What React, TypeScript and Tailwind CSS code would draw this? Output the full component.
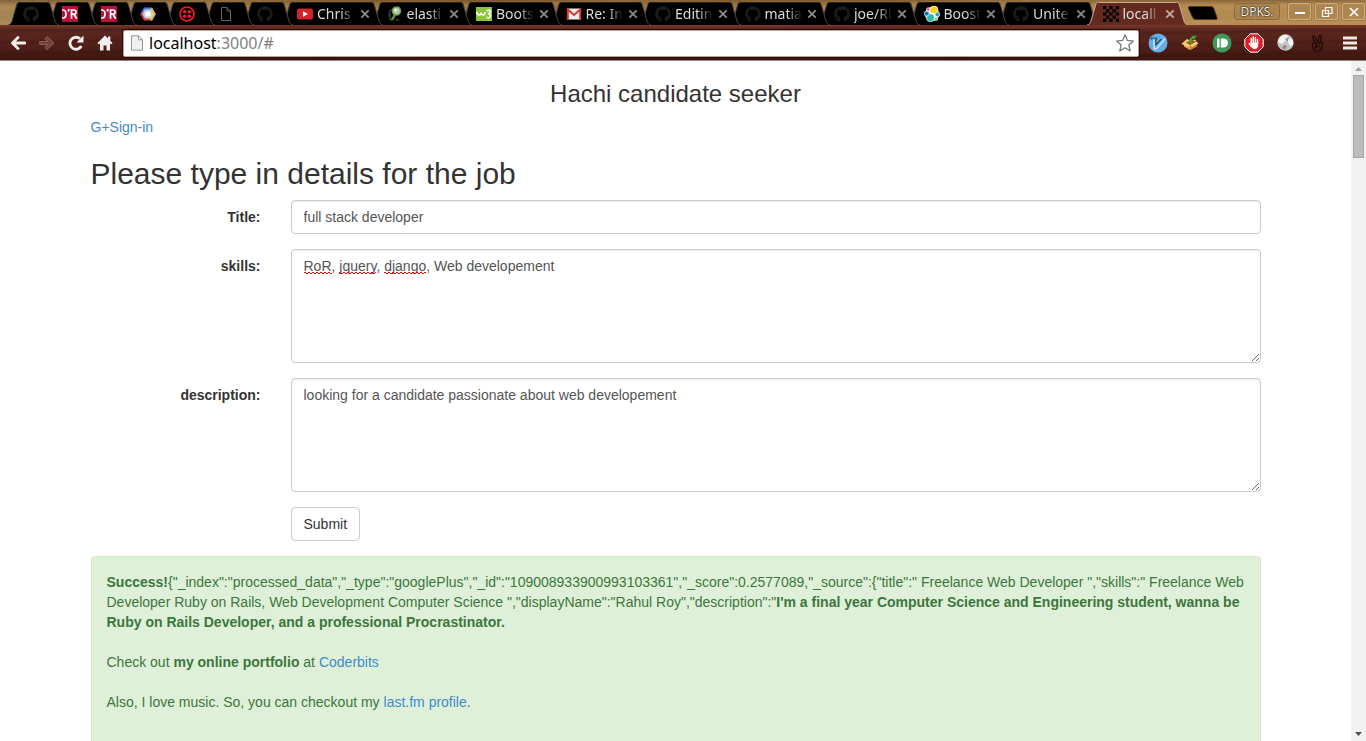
import React from "react";
import { FaGithub } from "react-icons/fa";

const TabCap = ({ right = false, active = false }: { right?: boolean; active?: boolean }) => (
  <svg
    viewBox="0 0 12 25"
    className={right ? "h-[25px] w-3 shrink-0 -scale-x-100" : "h-[25px] w-3 shrink-0"}
    aria-hidden="true"
  >
    <path d="M0 25C2.500 24.500 3.300 23 4 21L8.600 5C9.200 3 10 2 12 2V25Z" fill={active ? "#642a20" : "#000"} />
    <path
      d="M0 25C2.500 24.500 3.300 23 4 21L8.600 5C9.200 3 10 2 12 2"
      fill="none"
      stroke={active ? "#c9aaa0" : "#4a4440"}
      strokeWidth="1"
    />
  </svg>
);

const RedDR = () => (
  <svg viewBox="0 0 16 16" className="size-4">
    <rect width="16" height="16" fill="#b5123b" />
    <path
      d="M0 4H1C5 4 5 12 1 12H0M7 3L6.300 5.500M9.500 12.800V4H12C14.800 4 14.800 8.200 12 8.200H9.500M12 8.200L14.700 12.800"
      fill="none"
      stroke="#fff"
      strokeWidth="1.700"
    />
  </svg>
);

const CloudHex = () => (
  <svg viewBox="0 0 16 16" className="size-4">
    <path d="M4 1.500H12L14 5.500H5L2.500 10L.3 8Z" fill="#4a7fe8" />
    <path d="M12 1.500L15.800 8L12 14.500L8 12L12.500 8L10 3.500Z" fill="#e9bd2d" />
    <path d="M.3 8L4 14.500H12L13.500 11H7L3.500 6Z" fill="#d9483b" />
    <path d="M11 14.500H12L15.800 8L13 8L9.500 12Z" fill="#e9bd2d" />
    <path d="M5 3.500H11L13.500 8L11 12.500H5L2.500 8Z" fill="#c9d2e2" />
    <circle cx="8" cy="8" r="2.600" fill="#fff" />
  </svg>
);

const RedDots = () => (
  <svg viewBox="0 0 16 16" className="size-4">
    <circle cx="8" cy="8" r="7" fill="none" stroke="#ee1c25" strokeWidth="1.700" />
    <g fill="#ee1c25">
      <circle cx="5.700" cy="5.700" r="1.800" />
      <circle cx="10.300" cy="5.700" r="1.800" />
      <circle cx="5.700" cy="10.300" r="1.800" />
      <circle cx="10.300" cy="10.300" r="1.800" />
    </g>
  </svg>
);

const DarkPage = () => (
  <svg viewBox="0 0 16 16" className="size-4">
    <path d="M3.500 1.500H9L12.500 5V14.500H3.500ZM9 1.500V5H12.500" fill="none" stroke="#666" />
  </svg>
);

const Cat = () => <FaGithub className="size-4 text-[#1b1b1b]" />;

const Play = () => (
  <svg viewBox="0 0 16 16" className="size-4">
    <rect y="2.500" width="16" height="11" rx="2.500" fill="#d3222a" />
    <path d="M6 5.300L11 8L6 10.700Z" fill="#fff" />
  </svg>
);

const Magnifier = () => (
  <svg viewBox="0 0 16 16" className="size-4">
    <path d="M5 4Q1.500 4 3 8Q1 9 3 10Q2 14 5 14M9 14H12" fill="none" stroke="#303030" strokeWidth="2" />
    <path d="M8 8.500L5 14" stroke="#5d8c35" strokeWidth="2.600" />
    <circle cx="9.500" cy="5" r="4" fill="#b5c9b0" stroke="#6d9f46" strokeWidth="1.600" />
    <circle cx="8.500" cy="4" r="1.500" fill="#e9f1e7" />
  </svg>
);

const GreenW3 = () => (
  <svg viewBox="0 0 16 16" className="size-4">
    <rect y="1" width="16" height="14" fill="#8bc53f" />
    <path
      d="M.8 6Q1 9 3 9Q4.800 9 4.800 6.500Q5 9 7 9Q9 9 9 6M10.500 5Q14.300 3 14.300 5.300Q14.300 7.500 12 7.500Q14.800 8 14.300 10.500Q13 13 10.500 11"
      fill="none"
      stroke="#fff"
      strokeWidth="1.600"
    />
  </svg>
);

const Mail = () => (
  <svg viewBox="0 0 16 16" className="size-4">
    <rect x="1" y="2.500" width="14" height="11" fill="#ececec" />
    <path d="M1.800 13.500V3.500L8 9L14.200 3.500V13.500" fill="none" stroke="#d8392c" strokeWidth="2" />
  </svg>
);

const Balls = () => (
  <svg viewBox="0 0 16 16" className="size-4">
    <circle cx="8" cy="8" r="7" fill="#fff" />
    <circle cx="10" cy="4" r="4" fill="#fed10a" stroke="#fff" strokeWidth=".7" />
    <circle cx="6.500" cy="11.700" r="4" fill="#24bbb1" stroke="#fff" strokeWidth=".7" />
    <circle cx="2.700" cy="7.500" r="2.500" fill="#0b78b5" stroke="#fff" strokeWidth=".7" />
    <circle cx="13.400" cy="8.500" r="2.400" fill="#26a5d8" stroke="#fff" strokeWidth=".7" />
    <circle cx="4.200" cy="3.400" r="1.700" fill="#ef5098" stroke="#fff" strokeWidth=".7" />
    <circle cx="12" cy="12.700" r="1.700" fill="#91c73e" stroke="#fff" strokeWidth=".7" />
  </svg>
);

const Checker = () => (
  <svg viewBox="0 0 16 16" className="size-4" fill="#000">
    <path d="M0 0H3.200V3.200H0ZM6.400 0H9.600V3.200H6.400ZM12.800 0H16V3.200H12.800ZM3.200 3.200H6.400V6.400H3.200ZM9.600 3.200H12.800V6.400H9.600ZM0 6.400H3.200V9.600H0ZM6.400 6.400H9.600V9.600H6.400ZM12.800 6.400H16V9.600H12.800ZM3.200 9.600H6.400V12.800H3.200ZM9.600 9.600H12.800V12.800H9.600ZM0 12.800H3.200V16H0ZM6.400 12.800H9.600V16H6.400ZM12.800 12.800H16V16H12.800Z" />
  </svg>
);

type TabData = { icon: () => React.JSX.Element; title?: string; name?: string; active?: boolean };

const tabs: TabData[] = [
  { icon: Cat, name: "GitHub" },
  { icon: RedDR, name: "Pinned page" },
  { icon: RedDR, name: "Pinned page" },
  { icon: CloudHex, name: "Cloud console" },
  { icon: RedDots, name: "Pinned page" },
  { icon: DarkPage, name: "Blank page" },
  { icon: Cat, name: "GitHub" },
  { icon: Play, title: "Chris" },
  { icon: Magnifier, title: "elasti" },
  { icon: GreenW3, title: "Boots" },
  { icon: Mail, title: "Re: In" },
  { icon: Cat, title: "Editin" },
  { icon: Cat, title: "matia" },
  { icon: Cat, title: "joe/Rl" },
  { icon: Balls, title: "Boost" },
  { icon: Cat, title: "Unite" },
  { icon: Checker, title: "locall", active: true },
];

const Tab = ({ tab, order }: { tab: TabData; order: number }) => {
  const Icon = tab.icon;
  const fill = tab.active ? "bg-[#642a20] border-[#c9aaa0]" : "bg-black border-[#2a231c]";
  return (
    <div
      className={`relative -mr-3 flex h-[25px] min-w-0 ${tab.title ? "flex-1" : "w-[51px] shrink-0"}`}
      style={{ zIndex: order }}
    >
      <TabCap active={tab.active} />
      <div className={`mt-[2px] flex min-w-0 flex-1 items-center border-t ${fill}`}>
        <button
          className={`flex min-w-0 flex-1 items-center gap-1 ${tab.title ? "pl-1" : "justify-center pr-[6px]"}`}
          aria-label={tab.name ?? tab.title}
        >
          <span className="shrink-0">
            <Icon />
          </span>
          {tab.title && (
            <span className="min-w-0 flex-1 overflow-hidden text-left text-[14px] leading-5 whitespace-nowrap text-[#dcdcdc] [mask-image:linear-gradient(to_right,#000_60%,transparent)]">
              {tab.title}
            </span>
          )}
        </button>
        {tab.title && (
          <button className="ml-1 grid h-4 w-3 shrink-0 place-items-center" aria-label={`Close ${tab.title}`}>
            <svg viewBox="0 0 10 10" className={`size-[10px] ${tab.active ? "text-[#c4aaa4]" : "text-[#8c8c8c]"}`}>
              <path d="M1.300 1.300L8.700 8.700M8.700 1.300L1.300 8.700" stroke="currentColor" strokeWidth="1.800" />
            </svg>
          </button>
        )}
      </div>
      <TabCap right active={tab.active} />
    </div>
  );
};

const winButton =
  "grid h-[17px] w-[23px] place-items-center rounded-[2px] border border-[#d2ae80] bg-[#7a542826] text-white shadow-[0_0_0_1px_#8a673c80]";

const WindowControls = () => (
  <div className="flex w-[132px] shrink-0 items-start gap-1 pt-[3px]">
    <div className="mr-1 h-[17px] w-[46px] rounded-[3px] border border-[#8a6a40] bg-[#7a542826] text-center font-['Open_Sans',sans-serif] text-[12px] leading-[15px] text-white [text-shadow:0_0_2px_#000,0_0_1px_#000]">
      DPKS.
    </div>
    <button className={winButton} aria-label="Minimize">
      <svg viewBox="0 0 12 12" className="size-3">
        <path d="M1 7H11" stroke="#fff" strokeWidth="2" />
      </svg>
    </button>
    <button className={winButton} aria-label="Restore">
      <svg viewBox="0 0 12 12" className="size-3" fill="none" stroke="#fff">
        <path d="M4.500 1.500H11V7.500H4.500ZM1.500 4.500H7.500V10.500H1.500Z" strokeWidth="1.200" />
      </svg>
    </button>
    <button className={winButton} aria-label="Close">
      <svg viewBox="0 0 12 12" className="size-3">
        <path d="M2 2L10 10M10 2L2 10" stroke="#fff" strokeWidth="1.700" />
      </svg>
    </button>
  </div>
);

const navButton = "grid h-8 w-[29px] shrink-0 place-items-center";
const extButton = "grid h-8 w-8 shrink-0 place-items-center";

const Toolbar = () => (
  <div className="flex h-9 items-center border-b border-[#8b8583] bg-[#4d1c14] bg-[repeating-linear-gradient(179deg,transparent_0_4px,#2c0c0833_6px_7px,transparent_9px_11px),linear-gradient(to_bottom,#7a382b,#5c2820_12%,#54221a_50%,#3e1610)] pt-px pl-[3px]">
    <button className={navButton} aria-label="Back">
      <svg viewBox="0 0 16 16" className="size-4">
        <path d="M15 8H3.500M8 2.500L2.500 8L8 13.500" fill="none" stroke="#f4eeee" strokeWidth="2.800" strokeLinecap="round" strokeLinejoin="round" />
      </svg>
    </button>
    <button className={navButton} aria-label="Forward">
      <svg viewBox="0 0 16 16" className="size-4">
        <path
          d="M.7 6.500H8.500L6 3.500L8 1.500L15 8L8 14.500L6 12.500L8.500 9.500H.7Z"
          fill="#71423a"
          stroke="#916861"
          strokeWidth=".9"
          strokeLinejoin="round"
        />
      </svg>
    </button>
    <button className={navButton} aria-label="Reload">
      <svg viewBox="0 0 16 16" className="size-4">
        <path d="M13.300 11A6 6 0 1 1 12 3.800" fill="none" stroke="#f4eeee" strokeWidth="2.800" />
        <path d="M15.500 .5V7.500H8.500Z" fill="#f4eeee" />
      </svg>
    </button>
    <button className={navButton} aria-label="Home">
      <svg viewBox="0 0 16 16" className="size-4">
        <path d="M8 .5L15.500 8L14.500 9.300L13 8.500V15.500H9.500V10.500H6.500V15.500H3V8.500L1.500 9.300L.5 8Z" fill="#f4eeee" />
        <path d="M11 1.500H13.300V6H11Z" fill="#f4eeee" />
      </svg>
    </button>
    <div className="mr-[3px] ml-1 flex h-[27px] min-w-0 flex-1 items-center rounded-[2px] border border-[#c0a39c] bg-white pr-[3px] pl-[5px] shadow-[0_0_0_1px_#2c0f0a]">
      <svg viewBox="0 0 16 16" className="size-4 shrink-0">
        <path d="M2.500 .8H9.500L13.500 4.800V15.200H2.500Z" fill="#f0f0f0" stroke="#969696" />
        <path d="M9.500 .8V4.800H13.500Z" fill="#fff" stroke="#969696" />
      </svg>
      <div className="ml-1 flex-1 text-[16px] leading-5 text-[#828282]">
        <span className="text-black">localhost</span>:3000/#
      </div>
      <button className="grid size-5 place-items-center" aria-label="Bookmark this page">
        <svg viewBox="0 0 18 18" className="size-[18px]">
          <path
            d="M9 .8L11.400 6.400L17.400 7L12.800 11L14.200 17L9 13.800L3.800 17L5.200 11L.6 7L6.600 6.400Z"
            fill="#fff"
            stroke="#747474"
            strokeWidth="1.200"
            strokeLinejoin="round"
          />
        </svg>
      </button>
    </div>
    <button className={extButton} aria-label="Vimium">
      <svg viewBox="0 0 20 20" className="size-5">
        <circle cx="10" cy="10" r="9.500" fill="#62aee2" />
        <path d="M3.500 4.500H8.500V6H7.800V11.500L13 6L12 4.500H17L17.500 6L9 16H6V6H3.500Z" fill="#74bceb" />
        <path d="M3.500 6.500V5H8.500V6.500L7.800 7V12L13.500 6" fill="none" stroke="#1b4a74" strokeWidth="1.200" />
        <path d="M17.500 5.500L8.500 16H6V7" fill="none" stroke="#e8f4fc" strokeWidth="1.100" />
      </svg>
    </button>
    <button className={extButton} aria-label="Package">
      <svg viewBox="0 0 20 20" className="size-5">
        <path d="M4 9L10 12L16.500 9V13.500L10 17L4 13.500Z" fill="#e6a94a" />
        <path d="M10 12L16.500 9V13.500L10 17Z" fill="#c98726" />
        <path d="M4 9L10 6.500L16.500 9L10 12Z" fill="#8a5a1a" />
        <path d="M4 8.500L1.500 11L8 14L10 12ZM16.500 8.500L18.500 10.500L12 14L10 12ZM4 8.500L7 6L10 7.500L6 9.500ZM16.500 8.500L15 6.500L12 8Z" fill="#f5cb77" />
        <path d="M9.500 10C8.500 6 10 4.500 12 4.300L11.500 3L17 2.500L14 6.500L13 5.700C11.500 6.500 11.500 8 12 10Z" fill="#44a52c" />
      </svg>
    </button>
    <button className={extButton} aria-label="Pushbullet">
      <svg viewBox="0 0 20 20" className="size-5">
        <circle cx="10" cy="10" r="9.500" fill="#3f9a58" />
        <path d="M5 5.500H7.500V14.500H5ZM8.800 5.500H11.500A4.500 4.500 0 0 1 11.500 14.500H8.800Z" fill="#fff" />
      </svg>
    </button>
    <button className={extButton} aria-label="Ad blocker">
      <svg viewBox="0 0 20 20" className="size-5">
        <path d="M6.200 .8H13.800L19.200 6.200V13.800L13.800 19.200H6.200L.8 13.800V6.200Z" fill="#d8202a" stroke="#fff" />
        <path
          d="M7.300 10V5.500M9.300 9V4M11.400 9V4.500M13.500 10.500V6.500M5.200 10.500L7.500 13.500"
          stroke="#fff"
          strokeWidth="1.500"
          strokeLinecap="round"
        />
        <path d="M6.600 9.500H14.200V12C14.200 17 8.500 17.500 7 13Z" fill="#fff" />
      </svg>
    </button>
    <button className={extButton} aria-label="Globe">
      <svg viewBox="0 0 20 20" className="size-5">
        <circle cx="9.500" cy="9.500" r="8.200" fill="#c4c4c4" />
        <path d="M2.500 6Q6 .8 11 1.800L12 4L9 5.500L9.500 8L6 11L2 9ZM13 5L17 7V12L14 13L11.500 9Z" fill="#f2f2f2" />
        <path d="M8 12L11 13L9 16.500L6 15ZM10 6L12.500 5L11.500 9Z" fill="#8c8c8c" />
      </svg>
    </button>
    <button className={extButton} aria-label="Peace">
      <svg viewBox="0 0 20 20" className="size-5" fill="none" stroke="#1d0a06" strokeWidth="1.200" strokeLinejoin="round">
        <path d="M7 10L4.500 4Q5.300 2 6.800 3.200L9.300 9L11.500 2.500Q13 1.500 13.500 3L12 9.500Q14.800 9 14.800 11.500L13.500 15.500L11 18H7L5 15L4.300 11.500Q5 9.500 7 10L9 12L6.500 13.500M9.300 9.800Q11.500 9 12 12M7 15L10 13.500L12 13.500" />
      </svg>
    </button>
    <button className={extButton} aria-label="Menu">
      <svg viewBox="0 0 14 14" className="size-[14px]">
        <path d="M1 2H13M1 7H13M1 12H13" stroke="#eee8e6" strokeWidth="3.200" strokeLinecap="square" />
      </svg>
    </button>
  </div>
);

const field =
  "block w-full min-w-0 flex-1 rounded-[4px] border border-[#ccc] bg-white px-3 py-[6px] text-[14px] leading-5 text-[#555] shadow-[inset_0_1px_1px_rgba(0,0,0,0.075)] outline-none";
const labelClass = "w-[170px] shrink-0 pt-[7px] text-right font-bold";
const typo =
  "bg-[linear-gradient(45deg,transparent_38%,#f00_38%_62%,transparent_62%),linear-gradient(135deg,transparent_38%,#f00_38%_62%,transparent_62%)] bg-[length:4px_2px] bg-[position:0_100%,2px_100%] bg-repeat-x";

const JobForm = () => (
  <form onSubmit={(e) => e.preventDefault()} className="mb-[15px] flex flex-col gap-[15px]">
    <div className="flex gap-[30px]">
      <label htmlFor="title" className={labelClass}>
        Title:
      </label>
      <input id="title" type="text" defaultValue="full stack developer" className={field} />
    </div>
    <div className="flex gap-[30px]">
      <label htmlFor="skills" className={labelClass}>
        skills:
      </label>
      <div className="relative flex min-w-0 flex-1">
        <textarea
          id="skills"
          rows={5}
          spellCheck={false}
          defaultValue="RoR, jquery, django, Web developement"
          className={field}
        />
        <div
          aria-hidden="true"
          className="pointer-events-none absolute inset-x-0 top-0 border border-transparent px-3 py-[6px] text-transparent"
        >
          <span className={typo}>RoR</span>, <span className={typo}>jquery</span>, <span className={typo}>django</span>
        </div>
      </div>
    </div>
    <div className="flex gap-[30px]">
      <label htmlFor="description" className={labelClass}>
        description:
      </label>
      <textarea
        id="description"
        rows={5}
        spellCheck={false}
        defaultValue="looking for a candidate passionate about web developement"
        className={field}
      />
    </div>
    <div className="flex pl-[200px]">
      <button type="submit" className="rounded-[4px] border border-[#ccc] bg-white px-3 py-[6px] text-[#333]">
        Submit
      </button>
    </div>
  </form>
);

const Result = () => (
  <div className="rounded-[4px] border border-[#d6e9c6] bg-[#dff0d8] p-[15px] pb-20 text-[#3c763d]">
    <p>
      <strong>Success!</strong>
      {
        '{"_index":"processed_data","_type":"googlePlus","_id":"109008933900993103361","_score":0.2577089,"_source":{"title":" Freelance Web Developer ","skills":" Freelance Web Developer Ruby on Rails, Web Development Computer Science ","displayName":"Rahul Roy","description":"'
      }
      <strong>
        I'm a final year Computer Science and Engineering student, wanna be Ruby on Rails Developer, and a professional
        Procrastinator.
      </strong>
    </p>
    <p className="mt-5">
      Check out <strong>my online portfolio</strong> at{" "}
      <a href="#coderbits" className="text-[#428bca]">
        Coderbits
      </a>
    </p>
    <p className="mt-5">
      Also, I love music. So, you can checkout my{" "}
      <a href="#lastfm" className="text-[#428bca]">
        last.fm profile
      </a>
      .
    </p>
  </div>
);

const ScrollTrack = () => (
  <div className="flex w-[15px] shrink-0 flex-col items-center bg-[#f1f1f1]" aria-hidden="true">
    <svg viewBox="0 0 7 4" className="mt-[6px] mb-1 h-1 w-[7px] shrink-0">
      <path d="M3.500 0L7 4H0Z" fill="#a3a3a3" />
    </svg>
    <div className="h-[83px] w-[11px] shrink-0 border border-[#a6a6a6] bg-[#bcbcbc]" />
    <svg viewBox="0 0 7 4" className="mt-auto mb-[5px] h-1 w-[7px] shrink-0">
      <path d="M0 0H7L3.500 4Z" fill="#505050" />
    </svg>
  </div>
);

export default function App() {
  return (
    <div className="flex h-screen flex-col overflow-hidden bg-white">
      <header className="shrink-0 font-['Noto_Sans',sans-serif]">
        <div className="flex h-[25px] bg-[#a57c48] bg-[repeating-linear-gradient(178deg,transparent_0_5px,#c8a26a33_8px_9px,transparent_12px_14px),linear-gradient(to_bottom,#4a301066,transparent_20%),linear-gradient(to_right,#a58353,#9c7039_40%,#b88f57)] pl-2">
          <div className="isolate flex min-w-0 flex-1 pr-3">
            {tabs.map((tab, i) => (
              <Tab key={i} tab={tab} order={tab.active ? 50 : 30 - i} />
            ))}
          </div>
          <button className="w-[46px] shrink-0 pt-[6px]" aria-label="New tab">
            <svg viewBox="0 0 46 19" className="h-[19px] w-[46px]">
              <path
                d="M1.500 .5H22C24.500 .5 25 1 26 3L29 11.500C29.500 13 29 13.500 27 13.500H8C6 13.500 5.500 13 4.500 11L.5 2.500C0 1 .5 .5 1.500 .5Z"
                fill="#000"
                stroke="#4c3820"
              />
            </svg>
          </button>
          <WindowControls />
        </div>
        <Toolbar />
      </header>
      <div className="flex min-h-0 flex-1 font-['Liberation_Sans',Arial,sans-serif] text-[14px] leading-5 text-[#333]">
        <main className="min-w-0 flex-1 overflow-hidden">
          <div className="mx-auto w-full max-w-[1170px]">
            <h3 className="mt-5 mb-[10px] text-center text-[24px] leading-[26px]">Hachi candidate seeker</h3>
            <a href="#signin" className="block w-fit text-[#428bca]">
              G+Sign-in
            </a>
            <h2 className="mt-5 mb-[10px] text-[30px] leading-[33px]">Please type in details for the job</h2>
            <JobForm />
            <Result />
          </div>
        </main>
        <ScrollTrack />
      </div>
    </div>
  );
}
